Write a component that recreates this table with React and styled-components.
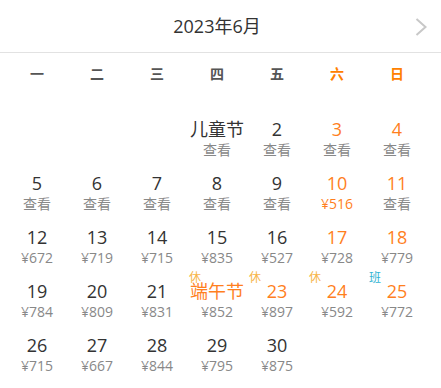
import React from "react";
import styled, { createGlobalStyle } from "styled-components";

const Global = createGlobalStyle`
  html, body { margin: 0; padding: 0; background: #fff; }
  body { font-family: "Open Sans", "Noto Sans CJK SC", sans-serif; }
`;

const ORANGE = "#ff7f1e";

const Wrap = styled.div`
  width: 441px;
  background: #fff;
`;

const Header = styled.div`
  height: 52px;
  border-bottom: 1px solid #e2e2e2;
  display: grid;
  grid-template-columns: 40px 1fr 40px;
  align-items: center;
  padding: 0 14px 0 7px;
`;

const Title = styled.div`
  grid-column: 2;
  text-align: center;
  font-size: 18px;
  color: #333;
  line-height: 24px;
`;

const Next = styled.svg`
  justify-self: end;
  width: 12px;
  height: 18px;
  margin-top: 2px;
`;

const Weekdays = styled.div`
  display: grid;
  grid-template-columns: repeat(7, 60px);
  padding-left: 7px;
  height: 40px;
  align-items: center;
`;

const Weekday = styled.div`
  text-align: center;
  font-size: 14px;
  font-weight: 700;
  color: ${(p) => (p.$weekend ? "#ff8000" : "#555")};
`;

const Days = styled.div`
  display: grid;
  grid-template-columns: repeat(7, 60px);
  grid-auto-rows: 42px;
  row-gap: 12px;
  padding: 25px 0 0 7px;
`;

const Cell = styled.div`
  position: relative;
  text-align: center;
`;

const Num = styled.div`
  font-size: 18px;
  line-height: 22px;
  color: ${(p) => (p.$orange ? ORANGE : "#333")};
`;

const Sub = styled.div`
  font-size: 14px;
  line-height: 20px;
  color: ${(p) => (p.$orange ? ORANGE : "#888")};
`;

const Badge = styled.span`
  position: absolute;
  left: 2px;
  top: -9px;
  font-size: 12px;
  line-height: 13px;
  color: ${(p) => (p.$work ? "#2fb3d3" : "#f7b548")};
`;

const days = [
  { d: 1, label: "儿童节", sub: "查看" },
  { d: 2, sub: "查看" },
  { d: 3, sub: "查看" },
  { d: 4, sub: "查看" },
  { d: 5, sub: "查看" },
  { d: 6, sub: "查看" },
  { d: 7, sub: "查看" },
  { d: 8, sub: "查看" },
  { d: 9, sub: "查看" },
  { d: 10, sub: "¥516", low: true },
  { d: 11, sub: "查看" },
  { d: 12, sub: "¥672" },
  { d: 13, sub: "¥719" },
  { d: 14, sub: "¥715" },
  { d: 15, sub: "¥835" },
  { d: 16, sub: "¥527" },
  { d: 17, sub: "¥728" },
  { d: 18, sub: "¥779" },
  { d: 19, sub: "¥784" },
  { d: 20, sub: "¥809" },
  { d: 21, sub: "¥831" },
  { d: 22, label: "端午节", sub: "¥852", badge: "休", hol: true },
  { d: 23, sub: "¥897", badge: "休", hol: true },
  { d: 24, sub: "¥592", badge: "休", hol: true },
  { d: 25, sub: "¥772", badge: "班", work: true },
  { d: 26, sub: "¥715" },
  { d: 27, sub: "¥667" },
  { d: 28, sub: "¥844" },
  { d: 29, sub: "¥795" },
  { d: 30, sub: "¥875" },
];

const weekNames = ["一", "二", "三", "四", "五", "六", "日"];
const OFFSET = 3;

export default function App() {
  const cells = [];
  for (let i = 0; i < OFFSET; i++) cells.push(<Cell key={"e" + i} />);
  days.forEach((day, i) => {
    const col = (i + OFFSET) % 7;
    const weekend = col >= 5;
    cells.push(
      <Cell key={day.d}>
        {day.badge && <Badge $work={day.work}>{day.badge}</Badge>}
        <Num $orange={weekend || day.hol}>{day.label || day.d}</Num>
        <Sub $orange={day.low}>{day.sub}</Sub>
      </Cell>
    );
  });
  return (
    <Wrap>
      <Global />
      <Header>
        <Title>2023年6月</Title>
        <Next viewBox="0 0 12 18">
          <polyline points="1.5,1 10.5,9 1.5,17" fill="none" stroke="#c8c8c8" strokeWidth="2" />
        </Next>
      </Header>
      <Weekdays>
        {weekNames.map((w, i) => (
          <Weekday key={w} $weekend={i >= 5}>{w}</Weekday>
        ))}
      </Weekdays>
      <Days>{cells}</Days>
    </Wrap>
  );
}
